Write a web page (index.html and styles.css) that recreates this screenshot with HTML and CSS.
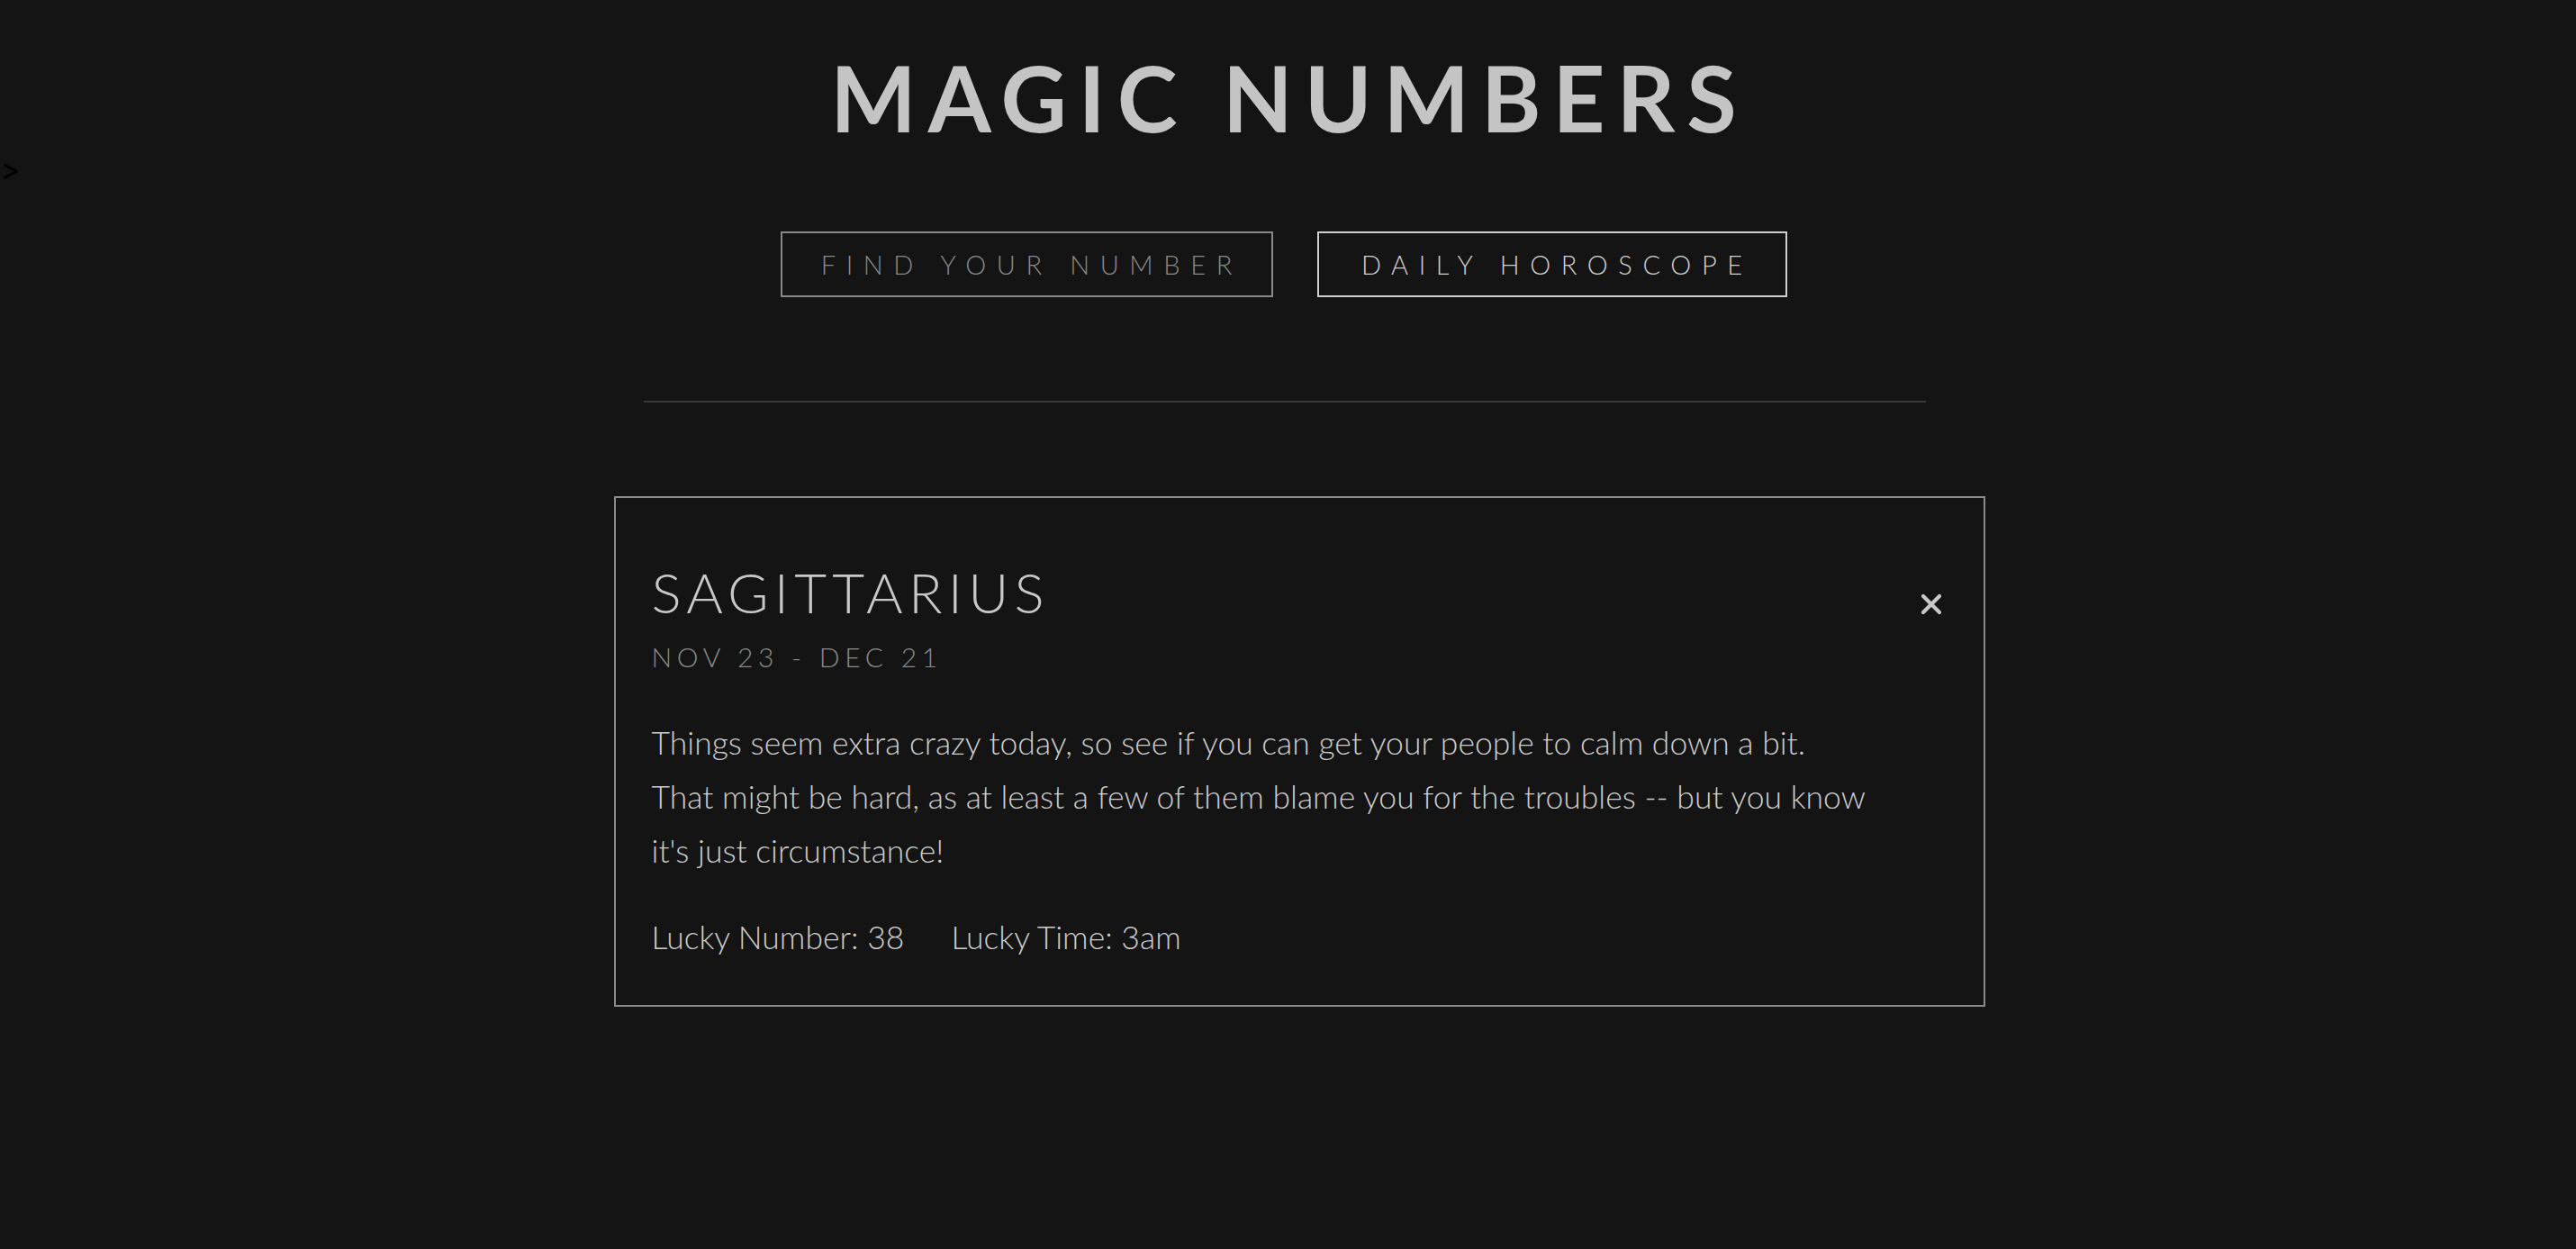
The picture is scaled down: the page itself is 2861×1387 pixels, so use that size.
FILE: index.html
```html
<!DOCTYPE html>
<html lang="en">
<head>
<meta charset="utf-8">
<title>Magic Numbers</title>
<link rel="stylesheet" href="styles.css">
</head>
<body>
<header class="masthead">
  <h1 class="title">MAGIC NUMBERS</h1>
</header>
<div class="stray">&gt;</div>
<nav class="tabs">
  <button class="tab tab-muted" type="button">FIND YOUR NUMBER</button>
  <button class="tab tab-active" type="button">DAILY HOROSCOPE</button>
</nav>
<hr class="divider">
<section class="card">
  <div class="card-head">
    <div class="sign-block">
      <h2 class="sign">SAGITTARIUS</h2>
      <p class="dates">NOV 23 - DEC 21</p>
    </div>
    <button class="close" type="button" aria-label="Close">
      <svg viewBox="0 0 24 24" width="24" height="24"><path d="M3 3 L21 21 M21 3 L3 21" stroke="#c8c8c8" stroke-width="4.2" stroke-linecap="round" fill="none"/></svg>
    </button>
  </div>
  <p class="reading">Things seem extra crazy today, so see if you can get your people to calm down a bit.<br>That might be hard, as at least a few of them blame you for the troubles -- but you know it's just circumstance!</p>
  <p class="lucky"><span>Lucky Number: 38</span><span>Lucky Time: 3am</span></p>
</section>
</body>
</html>
```
FILE: styles.css
```css
html, body {
  margin: 0;
  padding: 0;
  background: #141414;
}
body {
  font-family: Lato, "Liberation Sans", sans-serif;
  color: #000;
  min-height: 1387px;
}
.masthead {
  display: flex;
  justify-content: center;
  padding: 58px 10px 0 0;
}
.title {
  margin: 0 -0.128em 0 0;
  font-size: 101px;
  line-height: 1;
  font-weight: 700;
  color: #c4c4c4;
  letter-spacing: 0.128em;
}
.stray {
  margin-top: 15px;
  height: 30px;
  font-size: 40px;
  line-height: 30px;
  color: #000;
}
.tabs {
  margin-top: 53px;
  padding-right: 10px;
  display: flex;
  justify-content: center;
  gap: 49px;
}
.tab {
  box-sizing: border-box;
  height: 73px;
  background: transparent;
  font-family: Lato, "Liberation Sans", sans-serif;
  font-weight: 300;
  font-size: 29px;
  letter-spacing: 0.4em;
  white-space: nowrap;
  padding: 0 0 0 0.4em;
  text-align: center;
  cursor: pointer;
}
.tab-muted {
  width: 547px;
  color: #888;
  border: 2px solid #888;
}
.tab-active {
  width: 522px;
  color: #cfcfcf;
  border: 2px solid #cfcfcf;
}
.divider {
  width: 1424px;
  margin: 115px 0 0 calc(50% - 716px);
  border: 0;
  height: 2px;
  background: #3a3a3a;
}
.card {
  box-sizing: border-box;
  width: 1523px;
  margin: 104px 0 0 calc(50% - 749px);
  border: 2px solid #8a8a8a;
  padding: 73px 46px 45px 40px;
}
.card-head {
  display: flex;
  justify-content: space-between;
  align-items: flex-start;
}
.sign {
  margin: 0;
  font-size: 62px;
  line-height: 1;
  font-weight: 300;
  letter-spacing: 0.1em;
  color: #c8c8c8;
}
.dates {
  margin: 26px 0 0;
  font-size: 30px;
  line-height: 1;
  font-weight: 300;
  letter-spacing: 0.19em;
  color: #8a8a8a;
}
.close {
  margin-top: 33px;
  padding: 0;
  width: 24px;
  height: 24px;
  border: 0;
  background: transparent;
  display: flex;
}
.reading {
  margin: 51px 0 0;
  max-width: 1380px;
  font-size: 35.5px;
  line-height: 60px;
  font-weight: 300;
  color: #cdcdcd;
}
.lucky {
  margin: 36px 0 0;
  font-size: 35.5px;
  line-height: 60px;
  font-weight: 300;
  color: #cdcdcd;
  display: flex;
  gap: 52px;
}
```
